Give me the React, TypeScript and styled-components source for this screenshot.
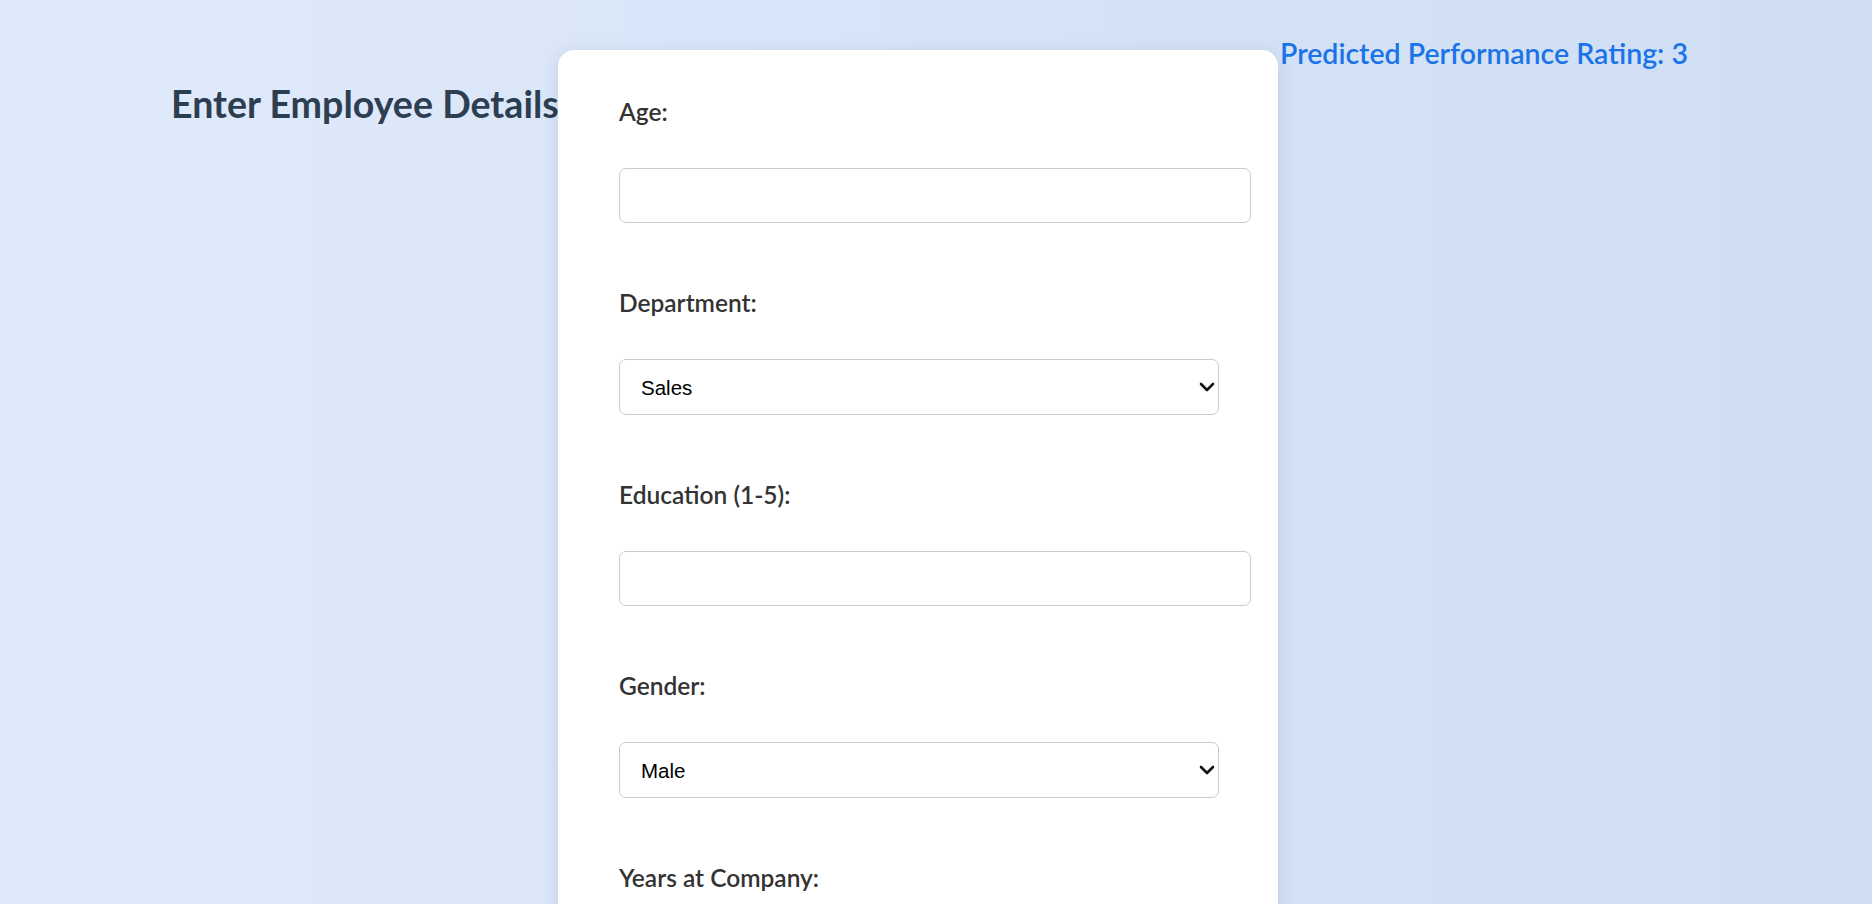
import React, { useState } from "react";
import styled, { createGlobalStyle } from "styled-components";
import { ChevronDown } from "lucide-react";

const GlobalStyle = createGlobalStyle`
  html, body {
    margin: 0;
    padding: 0;
    height: 100%;
    overflow: hidden;
  }
  body {
    font-family: Lato, "Open Sans", sans-serif;
    background: linear-gradient(to right, #e0eafc, #cfdef3);
  }
`;

interface FieldDef {
  name: string;
  label: string;
  options?: string[];
}

const fields: FieldDef[] = [
  { name: "age", label: "Age:" },
  { name: "department", label: "Department:", options: ["Sales", "HR", "IT", "Finance"] },
  { name: "education", label: "Education (1-5):" },
  { name: "gender", label: "Gender:", options: ["Male", "Female"] },
  { name: "years", label: "Years at Company:" },
];

const App: React.FC = () => {
  const [values, setValues] = useState<Record<string, string>>({
    department: "Sales",
    gender: "Male",
  });

  const handleChange = (name: string, value: string) =>
    setValues((prev) => ({ ...prev, [name]: value }));

  return (
    <Page>
      <GlobalStyle />
      <Title>Enter Employee Details</Title>
      <FormCard onSubmit={(e) => e.preventDefault()}>
        {fields.map((f) => (
          <Field key={f.name}>
            <Label htmlFor={f.name}>{f.label}</Label>
            {f.options ? (
              <SelectWrap>
                <Select
                  id={f.name}
                  value={values[f.name]}
                  onChange={(e) => handleChange(f.name, e.target.value)}
                >
                  {f.options.map((o) => (
                    <option key={o}>{o}</option>
                  ))}
                </Select>
                <Arrow size={24} strokeWidth={2.6} />
              </SelectWrap>
            ) : (
              <Input
                id={f.name}
                type="number"
                value={values[f.name] || ""}
                onChange={(e) => handleChange(f.name, e.target.value)}
              />
            )}
          </Field>
        ))}
      </FormCard>
      <Result>Predicted Performance Rating: 3</Result>
    </Page>
  );
};

export default App;

const Page = styled.div`
  display: flex;
  align-items: flex-start;
  height: 100vh;
  padding-left: 171px;
  box-sizing: border-box;
`;

const Title = styled.h2`
  flex: 0 0 387px;
  min-width: 0;
  margin: 81px 0 0;
  font-size: 37.6px;
  font-weight: 700;
  line-height: 1.2;
  color: #2c3e50;
  white-space: nowrap;
`;

const FormCard = styled.form`
  flex: 0 0 720px;
  box-sizing: border-box;
  margin-top: 50px;
  padding: 47px 27px 40px 61px;
  background: #ffffff;
  border-radius: 16px;
  box-shadow: 0 4px 20px rgba(0, 0, 0, 0.1);
`;

const Field = styled.div`
  margin-bottom: 65px;
`;

const Label = styled.label`
  display: block;
  margin-bottom: 42px;
  font-size: 24.5px;
  font-weight: 600;
  line-height: 29px;
  color: #333333;
`;

const Input = styled.input`
  display: block;
  box-sizing: border-box;
  width: 100%;
  height: 55px;
  padding: 0 14px;
  border: 1px solid #cccccc;
  border-radius: 7px;
  background: #ffffff;
  font-family: "Liberation Sans", Arial, sans-serif;
  font-size: 20.5px;
  outline: none;
  -moz-appearance: textfield;

  &::-webkit-outer-spin-button,
  &::-webkit-inner-spin-button {
    -webkit-appearance: none;
    margin: 0;
  }
`;

const SelectWrap = styled.div`
  position: relative;
  width: 600px;
`;

const Select = styled.select`
  display: block;
  box-sizing: border-box;
  width: 100%;
  height: 56px;
  padding: 0 40px 0 21px;
  border: 1px solid #cccccc;
  border-radius: 7px;
  background: #ffffff;
  color: #000000;
  font-family: "Liberation Sans", Arial, sans-serif;
  font-size: 20.5px;
  appearance: none;
  outline: none;
`;

const Arrow = styled(ChevronDown)`
  position: absolute;
  right: 0;
  top: 50%;
  transform: translateY(-50%);
  color: #111111;
  pointer-events: none;
`;

const Result = styled.h3`
  flex: 0 0 auto;
  margin: 36px 0 0 2px;
  font-size: 28.5px;
  font-weight: 600;
  line-height: 1.2;
  color: #1a73e8;
  white-space: nowrap;
`;
